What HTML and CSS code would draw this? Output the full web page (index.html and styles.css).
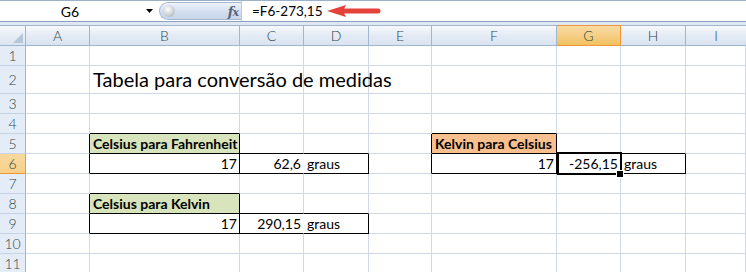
FILE: index.html
```html
<!DOCTYPE html>
<html>
<head>
<meta charset="utf-8">
<link rel="stylesheet" href="styles.css">
</head>
<body>
<div class="app">
  <div class="fbar">
    <div class="namebox">
      <span class="name">G6</span>
      <svg class="dd" width="7" height="4" viewBox="0 0 7 4"><polygon points="0,0 7,0 3.5,4" fill="#000"/></svg>
    </div>
    <div class="pill">
      <span class="knob"></span>
      <span class="fx">f<span class="fxx">x</span></span>
    </div>
    <div class="formula">
      <span class="ftext">=F6-273,15</span>
      <svg class="arrow" width="54" height="14" viewBox="0 0 54 14">
        <polygon points="0,7 19,1 16,7 19,13" fill="#e4413b"/>
        <line x1="15" y1="7" x2="51" y2="7" stroke="#e4413b" stroke-width="5" stroke-linecap="round"/>
      </svg>
    </div>
  </div>
  <div class="gap"></div>
  <div class="sheet">
    <div class="corner"><svg width="10" height="10" viewBox="0 0 10 10"><polygon points="10,0 10,10 0,10" fill="#b7c6d9"/></svg></div>
    <div class="ch">A</div><div class="ch">B</div><div class="ch">C</div><div class="ch">D</div><div class="ch">E</div><div class="ch">F</div><div class="ch ch-sel">G</div><div class="ch">H</div><div class="ch last">I</div>
    <div class="rh">1</div><div class="c"></div><div class="c"></div><div class="c"></div><div class="c"></div><div class="c"></div><div class="c"></div><div class="c"></div><div class="c"></div><div class="c"></div>
    <div class="rh">2</div><div class="c"></div><div class="c title"><span>Tabela para conversão de medidas</span></div><div class="c"></div><div class="c"></div><div class="c"></div><div class="c"></div><div class="c"></div><div class="c"></div><div class="c"></div>
    <div class="rh">3</div><div class="c"></div><div class="c"></div><div class="c"></div><div class="c"></div><div class="c"></div><div class="c"></div><div class="c"></div><div class="c"></div><div class="c"></div>
    <div class="rh">4</div><div class="c"></div><div class="c bb"></div><div class="c"></div><div class="c"></div><div class="c"></div><div class="c bb"></div><div class="c"></div><div class="c"></div><div class="c"></div>
    <div class="rh">5</div><div class="c br"></div><div class="c br bb green"><span>Celsius para Fahrenheit</span></div><div class="c bb"></div><div class="c bb"></div><div class="c br"></div><div class="c br bb orange"><span>Kelvin para Celsius</span></div><div class="c bb"></div><div class="c bb"></div><div class="c"></div>
    <div class="rh rh-sel">6</div><div class="c br"></div><div class="c br bb num"><span>17</span></div><div class="c bb bw num"><span>62,6</span></div><div class="c br bb"><span>graus</span></div><div class="c br"></div><div class="c br bb num"><span>17</span></div><div class="c bb br num sel"><span>-256,15</span></div><div class="c br bb"><span>graus</span></div><div class="c"></div>
    <div class="rh">7</div><div class="c"></div><div class="c bb"></div><div class="c"></div><div class="c"></div><div class="c"></div><div class="c"></div><div class="c"></div><div class="c"></div><div class="c"></div>
    <div class="rh">8</div><div class="c br"></div><div class="c br bb green"><span>Celsius para Kelvin</span></div><div class="c bb"></div><div class="c bb"></div><div class="c"></div><div class="c"></div><div class="c"></div><div class="c"></div><div class="c"></div>
    <div class="rh">9</div><div class="c br"></div><div class="c br bb num"><span>17</span></div><div class="c bb bw num"><span>290,15</span></div><div class="c br bb"><span>graus</span></div><div class="c"></div><div class="c"></div><div class="c"></div><div class="c"></div><div class="c"></div>
    <div class="rh">10</div><div class="c"></div><div class="c"></div><div class="c"></div><div class="c"></div><div class="c"></div><div class="c"></div><div class="c"></div><div class="c"></div><div class="c"></div>
    <div class="rh">11</div><div class="c"></div><div class="c"></div><div class="c"></div><div class="c"></div><div class="c"></div><div class="c"></div><div class="c"></div><div class="c"></div><div class="c"></div>
  </div>
</div>
</body>
</html>
```
FILE: styles.css
```css
* { box-sizing: border-box; }
html, body { margin: 0; padding: 0; background: #fff; }
body { width: 746px; height: 272px; overflow: hidden; font-family: Lato, "Open Sans", sans-serif; }

.app { width: 746px; }

.fbar {
  height: 22px;
  display: flex;
  align-items: stretch;
  border-top: 1px solid #9bb0c9;
  border-bottom: 1px solid #8aa2bf;
  background: #fff;
}
.namebox {
  width: 159px;
  display: flex;
  align-items: center;
}
.name {
  width: 140px;
  text-align: center;
  font-size: 14px;
  color: #000;
}
.dd { margin-left: 6px; }
.pill {
  width: 82px;
  margin: 1px 0;
  border: 1px solid #a4b7d1;
  border-right: none;
  border-radius: 10px 0 0 10px;
  background: linear-gradient(#eef3fa, #d3def0 55%, #c8d6ea);
  display: flex;
  align-items: center;
  justify-content: space-between;
  padding: 0 3px;
}
.knob {
  width: 12px;
  height: 12px;
  border-radius: 50%;
  background: radial-gradient(circle at 40% 35%, #ffffff, #c9ccd1 60%, #9ea6b1);
}
.fx {
  font-family: "DejaVu Serif", "Liberation Serif", serif;
  font-style: italic;
  font-weight: bold;
  font-size: 13px;
  color: #56657a;
  letter-spacing: -1px;
}
.fxx { font-size: 11px; }
.formula {
  flex: 1;
  display: flex;
  align-items: center;
  padding-left: 10px;
  border-left: 1px solid #b9c9dd;
}
.ftext { font-size: 13.5px; color: #000; }
.arrow { margin-left: 4px; }

.gap {
  height: 3px;
  background: #dfe7f2;
}

.sheet {
  display: grid;
  grid-template-columns: 26px 64px 150px 64px 65px 63px 125px 64px 65px 1fr;
  grid-template-rows: 21px 20px 28px repeat(9, 20px);
  font-size: 14px;
  color: #000;
}

.corner {
  border-top: 1px solid #9eb6ce;
  border-right: 1px solid #9eb6ce;
  border-bottom: 1px solid #9eb6ce;
  background: linear-gradient(#f4f7fb, #dbe4f0);
  display: flex;
  align-items: flex-end;
  justify-content: flex-end;
  padding: 0 2px 2px 0;
}
.ch {
  border-top: 1px solid #9eb6ce;
  border-right: 1px solid #9eb6ce;
  border-bottom: 1px solid #9eb6ce;
  background: linear-gradient(#f6f8fc, #e4ebf5 50%, #d9e3f0);
  display: flex;
  align-items: center;
  justify-content: center;
  color: #2f4747;
  font-size: 14px;
  font-weight: 300;
}
.ch.last { border-right: none; }
.ch-sel {
  background: linear-gradient(#f9dba3, #f6cf86 50%, #f1c05f);
  border-color: #f29536;
}
.rh {
  background: #e4ecf7;
  border-right: 1px solid #9eb6ce;
  border-bottom: 1px solid #c5d3e3;
  display: flex;
  align-items: center;
  justify-content: center;
  color: #2f4747;
  font-size: 14px;
  font-weight: 300;
}
.rh-sel {
  background: linear-gradient(#f9d9a0, #f7d08a);
  border-right-color: #f29536;
  border-bottom-color: #f29536;
}

.c {
  border-right: 1px solid #d0d7e5;
  border-bottom: 1px solid #d0d7e5;
  display: flex;
  align-items: flex-end;
  padding: 0 3px 1px 3px;
  white-space: nowrap;
  line-height: 17px;
  position: relative;
}
.c > span { position: relative; z-index: 1; }
.c.br { border-right-color: #000; }
.c.bb { border-bottom-color: #000; }
.c.bw { border-right-color: #fff; }
.c.num { justify-content: flex-end; padding-right: 2px; }
.green { background: #d7e4bc; font-weight: bold; }
.orange { background: #fabf8f; font-weight: bold; }
.title { padding-bottom: 2px; }
.title > span { font-size: 20px; line-height: 24px; }

.sel::after {
  content: "";
  position: absolute;
  left: 0;
  top: -2px;
  right: -2px;
  bottom: -2px;
  border: 2px solid #000;
  box-shadow: inset 0 0 0 1px #fff;
  pointer-events: none;
}
.sel::before {
  content: "";
  position: absolute;
  right: -4px;
  bottom: -5px;
  width: 6px;
  height: 6px;
  background: #000;
  border: 1px solid #fff;
  z-index: 2;
}
```
